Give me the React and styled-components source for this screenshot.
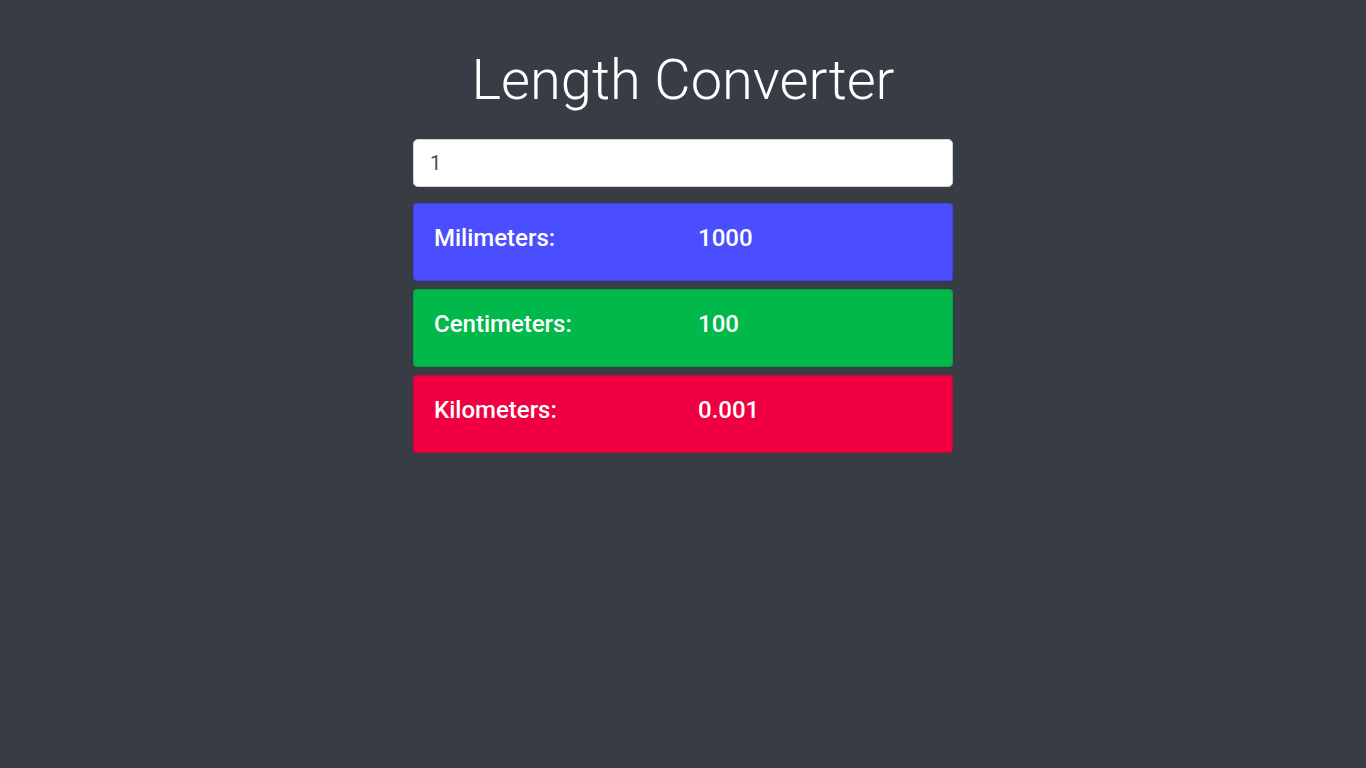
import React, { useState } from 'react';
import styled, { createGlobalStyle } from 'styled-components';

const GlobalStyle = createGlobalStyle`
  * { box-sizing: border-box; }
  html, body { margin: 0; }
  body {
    background: #383c45;
    font-family: Roboto, "Liberation Sans", sans-serif;
    color: #fff;
  }
`;

const Container = styled.div`
  width: 540px;
  margin: 0 auto;
  padding-top: 47px;
`;

const Title = styled.h1`
  margin: 0 0 25px;
  text-align: center;
  font-size: 3.5rem;
  font-weight: 300;
  line-height: 1.2;
`;

const Field = styled.input`
  display: block;
  width: 100%;
  height: 48px;
  margin-bottom: 16px;
  padding: 8px 16px;
  font-family: inherit;
  font-size: 20px;
  color: #495057;
  background: #fff;
  border: 1px solid #ced4da;
  border-radius: 4.8px;
  outline: none;
`;

const Card = styled.div`
  background: ${p => p.color};
  border: 1px solid rgba(0, 0, 0, 0.125);
  border-radius: 4px;
  margin-bottom: 8px;
  padding: 20px 5px 20px 20px;
`;

const Row = styled.div`
  display: grid;
  grid-template-columns: 264px 1fr;
  margin-bottom: 8px;
`;

const Label = styled.h4`
  margin: 0;
  font-size: 24px;
  font-weight: 500;
  line-height: 28px;
`;

const units = [
  { name: 'Milimeters', factor: 1000, color: '#4a4eff' },
  { name: 'Centimeters', factor: 100, color: '#00b94a' },
  { name: 'Kilometers', factor: 0.001, color: '#f00040' },
];

export default function App() {
  const [meters, setMeters] = useState('1');
  const value = parseFloat(meters) || 0;

  return (
    <>
      <GlobalStyle />
      <Container>
        <Title>Length Converter</Title>
        <Field type="number" value={meters} onChange={e => setMeters(e.target.value)} />
        {units.map(u => (
          <Card key={u.name} color={u.color}>
            <Row>
              <Label>{u.name}:</Label>
              <Label>{+(value * u.factor).toFixed(6)}</Label>
            </Row>
          </Card>
        ))}
      </Container>
    </>
  );
}
